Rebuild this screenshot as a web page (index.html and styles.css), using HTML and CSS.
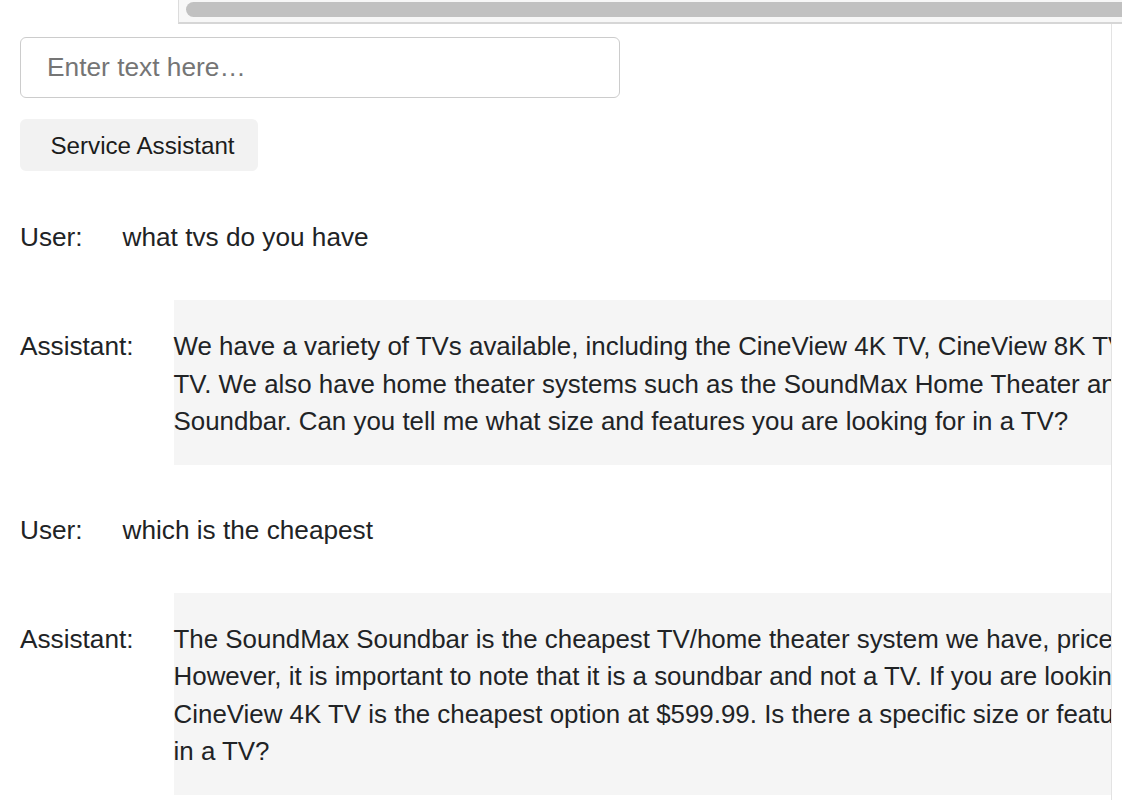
FILE: index.html
```html
<!DOCTYPE html>
<html lang="en">
<head>
<meta charset="utf-8">
<title>Service Assistant</title>
<link rel="stylesheet" href="styles.css">
</head>
<body>
<div class="hscroll"><div class="hscroll-thumb"></div></div>
<div class="frame">
  <div class="pane">
    <input class="prompt" type="text" placeholder="Enter text here…">
    <button class="send" type="button">Service Assistant</button>
    <div class="chat">
      <div class="msg">
        <div class="who">User:</div>
        <div class="text">what tvs do you have</div>
      </div>
      <div class="msg">
        <div class="who">Assistant:</div>
        <div class="text bot">We have a variety of TVs available, including the CineView 4K TV, CineView 8K TV, and CineView OLED<br>TV. We also have home theater systems such as the SoundMax Home Theater and SoundMax<br>Soundbar. Can you tell me what size and features you are looking for in a TV?</div>
      </div>
      <div class="msg">
        <div class="who">User:</div>
        <div class="text">which is the cheapest</div>
      </div>
      <div class="msg">
        <div class="who">Assistant:</div>
        <div class="text bot">The SoundMax Soundbar is the cheapest TV/home theater system we have, priced at $399.99.<br>However, it is important to note that it is a soundbar and not a TV. If you are looking for a TV, the<br>CineView 4K TV is the cheapest option at $599.99. Is there a specific size or feature you are looking for<br>in a TV?</div>
      </div>
    </div>
  </div>
  <div class="vscroll"></div>
</div>
</body>
</html>
```
FILE: styles.css
```css
html, body {
  margin: 0;
  padding: 0;
  background: #ffffff;
  overflow: hidden;
}
body {
  font-family: "Liberation Sans", Arial, Helvetica, sans-serif;
  color: #212325;
  width: 1122px;
  height: 800px;
}
.hscroll {
  margin-left: 178px;
  background: #f7f7f7;
  border-left: 1px solid #dcdcdc;
  border-bottom: 2px solid #d6d6d6;
  padding: 2px 0 0 7px;
  box-sizing: border-box;
  height: 24px;
}
.hscroll-thumb {
  height: 15px;
  border-radius: 8px 0 0 8px;
  background: #c1c1c1;
}
.frame {
  display: flex;
  height: 776px;
}
.pane {
  width: 1112px;
  flex: 0 0 1112px;
  border-right: 1px solid #e3e3e3;
  overflow: hidden;
  padding: 13px 0 0 20px;
  box-sizing: border-box;
}
.vscroll {
  flex: 1;
}
.prompt {
  display: block;
  width: 600px;
  height: 61px;
  box-sizing: border-box;
  border: 1.5px solid #cccccc;
  border-radius: 6px;
  padding: 0 0 0 26px;
  font-family: inherit;
  font-size: 26.3px;
  color: #222;
  outline: none;
  background: #fff;
}
.prompt::placeholder {
  color: #757575;
}
.send {
  display: block;
  margin-top: 21px;
  width: 238px;
  height: 52px;
  border: none;
  border-radius: 6px;
  background: #f2f2f2;
  font-family: inherit;
  font-size: 24.2px;
  color: #1c1c1c;
  padding: 2px 0 0 7px;
}
.chat {
  margin-top: 20px;
  display: flex;
  flex-direction: column;
  gap: 20px;
  width: 1400px;
}
.msg {
  display: flex;
  gap: 40px;
  font-size: 26.2px;
  line-height: 37.4px;
}
.who {
  flex: none;
  padding: 28px 0 24px;
}
.text {
  padding: 28px 0 24px;
  white-space: nowrap;
}
.bot {
  background: #f5f5f5;
  font-size: 25.9px;
  padding: 28px 24px 24px 0;
  margin-bottom: -1px;
}
```
